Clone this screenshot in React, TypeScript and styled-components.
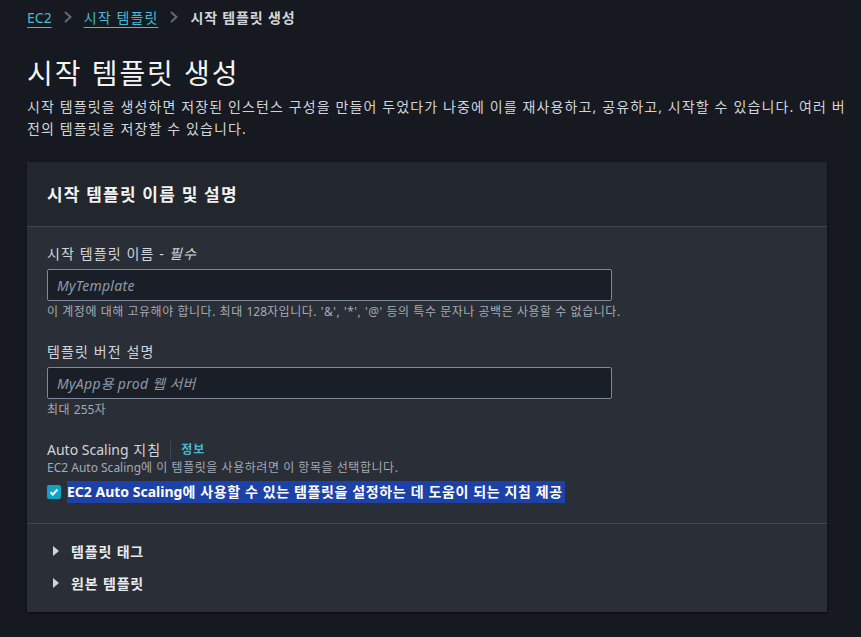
import { FunctionComponent } from 'react';
import styled, { createGlobalStyle } from 'styled-components';

const GlobalStyle = createGlobalStyle`
  html, body {
    margin: 0;
    padding: 0;
    background: #16191f;
  }
  body {
    font-family: 'Noto Sans', 'Noto Sans CJK KR', sans-serif;
    color: #d1d5db;
    font-size: 14px;
  }
  * {
    box-sizing: border-box;
    letter-spacing: 0.08em;
  }
`;

// Latin runs keep their natural tracking; only the hangul is opened up
const Latin = styled.span`
  letter-spacing: 0;
`;

const Page = styled.div`
  width: 861px;
  min-height: 637px;
  padding: 4px 0 24px 27px;
  background: #16191f;
`;

const Breadcrumbs = styled.nav`
  display: flex;
  align-items: center;
  gap: 11px;
  height: 26px;
  font-size: 14px;
`;

const Crumb = styled.a`
  color: #44b9d6;
  text-decoration: underline;
  text-underline-offset: 4px;
  text-decoration-thickness: 1px;
`;

const Current = styled.span`
  color: #d1d5db;
  font-weight: 700;
  letter-spacing: 0.06em;
`;

const Chevron = styled.svg`
  width: 10px;
  height: 12px;
  color: #5f6b7a;
`;

const Title = styled.h1`
  margin: 26px 0 6px;
  font-size: 28px;
  font-weight: 400;
  line-height: 34px;
  letter-spacing: 0.07em;
  color: #f2f3f3;
`;

const Description = styled.p`
  margin: 0;
  max-width: 830px;
  font-size: 14px;
  line-height: 22px;
  color: #d1d5db;
`;

const Card = styled.section`
  margin-top: 22px;
  width: 800px;
  background: #2a2e36;
  box-shadow: 0 1px 2px rgba(0, 0, 0, 0.6);
`;

const CardHeader = styled.header`
  height: 65px;
  display: flex;
  align-items: center;
  padding: 0 20px 1px;
  background: #22262d;
  border-bottom: 1px solid #414750;
`;

const CardTitle = styled.h2`
  margin: 0;
  font-size: 17px;
  font-weight: 700;
  letter-spacing: 0.07em;
  color: #f2f3f3;
`;

const CardBody = styled.div`
  padding: 17px 20px 20px;
  display: flex;
  flex-direction: column;
  gap: 22px;
  border-bottom: 1px solid #414750;
`;

const Field = styled.div`
  display: flex;
  flex-direction: column;
`;

const Label = styled.label<{ $flush?: boolean }>`
  display: flex;
  align-items: center;
  font-size: 14px;
  line-height: 20px;
  color: #d1d5db;
  margin-bottom: ${(p) => (p.$flush ? '0' : '5px')};
`;

const Required = styled.i`
  margin-left: 4px;
`;

const Info = styled.a`
  margin-left: 9px;
  padding-left: 10px;
  border-left: 1px solid #414750;
  color: #44b9d6;
  font-size: 12px;
  font-weight: 700;
  line-height: 18px;
`;

const Input = styled.input`
  width: 565px;
  height: 32px;
  padding: 0 9px;
  background: #1a1f27;
  border: 1px solid #7d8998;
  border-radius: 2px;
  font-family: 'Noto Sans', 'Noto Sans CJK KR', sans-serif;
  font-size: 14px;
  letter-spacing: 0.02em;
  color: #d1d5db;
  outline: none;

  &::placeholder {
    color: #8d99a8;
    font-style: italic;
  }
`;

const Hint = styled.div<{ $tight?: boolean }>`
  font-size: 12px;
  line-height: 16px;
  letter-spacing: 0.045em;
  color: #a3abb5;
  margin-top: ${(p) => (p.$tight ? '0' : '3px')};
`;

const CheckRow = styled.label`
  display: flex;
  align-items: center;
  gap: 6px;
  margin-top: 5px;
`;

const Box = styled.span`
  width: 14px;
  height: 14px;
  border-radius: 2px;
  background: #0fa3c4;
  display: flex;
  align-items: center;
  justify-content: center;
`;

const Selected = styled.span`
  background: #1c42a8;
  color: #ffffff;
  font-size: 14px;
  font-weight: 700;
  line-height: 22px;
  letter-spacing: 0.045em;
  padding-right: 2px;
`;

const Expanders = styled.div`
  padding: 17px 20px 19px;
  display: flex;
  flex-direction: column;
  gap: 12px;
`;

const Expander = styled.div`
  display: flex;
  align-items: center;
  gap: 12px;
  height: 20px;
  font-size: 14px;
  font-weight: 700;
  letter-spacing: 0.06em;
  color: #e9ebed;
`;

const Caret = styled.svg`
  width: 6px;
  height: 10px;
  margin-left: 6px;
`;

const ChevronIcon: FunctionComponent = () => (
  <Chevron viewBox="0 0 10 12" fill="none">
    <path d="M2 1l5.5 5L2 11" stroke="currentColor" strokeWidth="2" />
  </Chevron>
);

const CaretIcon: FunctionComponent = () => (
  <Caret viewBox="0 0 6 10">
    <path d="M0 0l6 5-6 5z" fill="#d1d5db" />
  </Caret>
);

const App: FunctionComponent = (): JSX.Element => (
  <Page>
    <GlobalStyle />
    <Breadcrumbs>
      <Crumb>
        <Latin>EC2</Latin>
      </Crumb>
      <ChevronIcon />
      <Crumb>시작 템플릿</Crumb>
      <ChevronIcon />
      <Current>시작 템플릿 생성</Current>
    </Breadcrumbs>

    <Title>시작 템플릿 생성</Title>
    <Description>
      시작 템플릿을 생성하면 저장된 인스턴스 구성을 만들어 두었다가 나중에 이를 재사용하고, 공유하고,
      시작할 수 있습니다. 여러 버전의 템플릿을 저장할 수 있습니다.
    </Description>

    <Card>
      <CardHeader>
        <CardTitle>시작 템플릿 이름 및 설명</CardTitle>
      </CardHeader>
      <CardBody>
        <Field>
          <Label>
            시작 템플릿 이름 -<Required>필수</Required>
          </Label>
          <Input placeholder="MyTemplate" />
          <Hint>
            이 계정에 대해 고유해야 합니다. 최대 <Latin>128</Latin>자입니다. '&amp;', '*', '@' 등의
            특수 문자나 공백은 사용할 수 없습니다.
          </Hint>
        </Field>
        <Field>
          <Label>템플릿 버전 설명</Label>
          <Input placeholder="MyApp용 prod 웹 서버" />
          <Hint>
            최대 <Latin>255</Latin>자
          </Hint>
        </Field>
        <Field>
          <Label $flush>
            <Latin>Auto Scaling</Latin>&nbsp;지침<Info>정보</Info>
          </Label>
          <Hint $tight>
            <Latin>EC2 Auto Scaling</Latin>에 이 템플릿을 사용하려면 이 항목을 선택합니다.
          </Hint>
          <CheckRow>
            <Box>
              <svg width="10" height="10" viewBox="0 0 10 10" fill="none">
                <path d="M1.5 5.2l2.3 2.3L8.5 2.5" stroke="#fff" strokeWidth="2" />
              </svg>
            </Box>
            <Selected>
              <Latin>EC2 Auto Scaling</Latin>에 사용할 수 있는 템플릿을 설정하는 데 도움이 되는 지침
              제공
            </Selected>
          </CheckRow>
        </Field>
      </CardBody>
      <Expanders>
        <Expander>
          <CaretIcon />
          템플릿 태그
        </Expander>
        <Expander>
          <CaretIcon />
          원본 템플릿
        </Expander>
      </Expanders>
    </Card>
  </Page>
);

export default App;
